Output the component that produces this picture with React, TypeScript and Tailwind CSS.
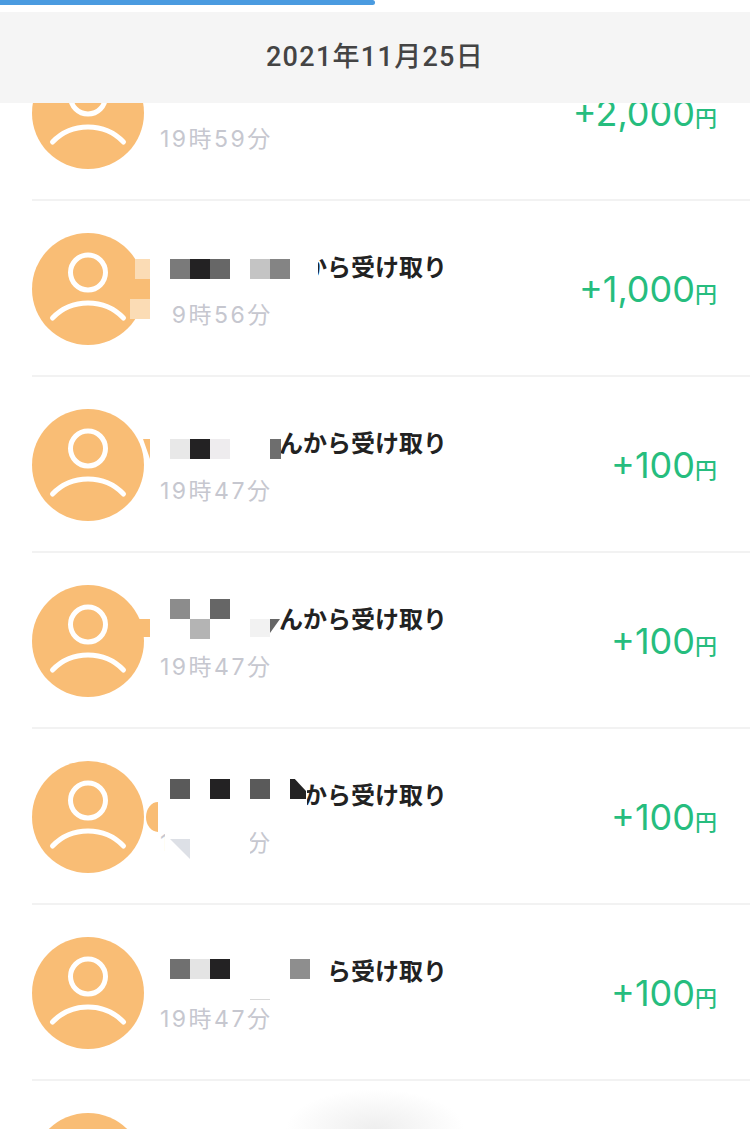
// 受け取り履歴リスト
type Cell = { x: number; y: number; w: number; h: number; c: string; clip?: string };

const FONT = { fontFamily: '"Liberation Sans", "Noto Sans CJK JP", sans-serif' };
const HEADER_FONT = { fontFamily: 'Roboto, "Noto Sans CJK JP", sans-serif' };
const NUM_FONT = { fontFamily: 'Inter, "Noto Sans CJK JP", sans-serif' };

const ORANGE = "#f9bd75";
const SOFT = "#fbdcb5";

type Row = { label: string; time: string; amount: string; cells: Cell[] };

const rows: Row[] = [
  { label: "から受け取り", time: "19時59分", amount: "+2,000", cells: [] },
  {
    label: "から受け取り",
    time: "19時56分",
    amount: "+1,000",
    cells: [
      { x: 135, y: 58, w: 15, h: 20, c: SOFT },
      { x: 135, y: 78, w: 15, h: 20, c: ORANGE },
      { x: 130, y: 98, w: 20, h: 20, c: SOFT },
      { x: 150, y: 50, w: 20, h: 80, c: "#fff" },
      { x: 170, y: 50, w: 148, h: 50, c: "#fff" },
      { x: 160, y: 100, w: 4, h: 30, c: "#fff" },
      { x: 170, y: 58, w: 20, h: 20, c: "#7a7a7a" },
      { x: 190, y: 58, w: 20, h: 20, c: "#232223" },
      { x: 210, y: 58, w: 20, h: 20, c: "#676767" },
      { x: 250, y: 58, w: 20, h: 20, c: "#c4c4c4" },
      { x: 270, y: 58, w: 20, h: 20, c: "#848484" },
    ],
  },
  {
    label: "んから受け取り",
    time: "19時47分",
    amount: "+100",
    cells: [
      { x: 143, y: 62, w: 7, h: 20, c: ORANGE, clip: "polygon(0 0,100% 0,100% 100%)" },
      { x: 150, y: 50, w: 131, h: 45, c: "#fff" },
      { x: 170, y: 62, w: 20, h: 20, c: "#e8e8e8" },
      { x: 190, y: 62, w: 20, h: 20, c: "#232223" },
      { x: 210, y: 62, w: 20, h: 20, c: "#eeecee" },
      { x: 270, y: 62, w: 11, h: 20, c: "#6e6e6e" },
    ],
  },
  {
    label: "んから受け取り",
    time: "19時47分",
    amount: "+100",
    cells: [
      { x: 131, y: 66, w: 19, h: 18, c: ORANGE },
      { x: 150, y: 40, w: 122, h: 55, c: "#fff" },
      { x: 170, y: 46, w: 20, h: 20, c: "#8c8c8c" },
      { x: 210, y: 46, w: 20, h: 20, c: "#666666" },
      { x: 190, y: 66, w: 20, h: 20, c: "#b4b4b4" },
      { x: 250, y: 66, w: 20, h: 18, c: "#f2f2f2" },
      { x: 270, y: 66, w: 10, h: 14, c: "#666666", clip: "polygon(0 0,100% 0,0 100%)" },
    ],
  },
  {
    label: "から受け取り",
    time: "19時47分",
    amount: "+100",
    cells: [
      { x: 150, y: 40, w: 157, h: 55, c: "#fff" },
      { x: 165, y: 95, w: 85, h: 40, c: "#fff" },
      { x: 146, y: 73, w: 12, h: 30, c: ORANGE, clip: "ellipse(100% 50% at 100% 50%)" },
      { x: 170, y: 50, w: 20, h: 20, c: "#5a5a5a" },
      { x: 210, y: 50, w: 20, h: 20, c: "#232223" },
      { x: 250, y: 50, w: 20, h: 20, c: "#5a5a5a" },
      { x: 290, y: 50, w: 16, h: 20, c: "#232223", clip: "polygon(0 0,30% 0,100% 60%,100% 100%,0 100%)" },
      { x: 170, y: 110, w: 20, h: 20, c: "#dde0e6", clip: "polygon(0 0,100% 0,100% 100%)" },
    ],
  },
  {
    label: "から受け取り",
    time: "19時47分",
    amount: "+100",
    cells: [
      { x: 160, y: 40, w: 167, h: 55, c: "#fff" },
      { x: 170, y: 54, w: 20, h: 20, c: "#707070" },
      { x: 190, y: 54, w: 20, h: 20, c: "#e4e4e4" },
      { x: 210, y: 54, w: 20, h: 20, c: "#232223" },
      { x: 290, y: 54, w: 20, h: 20, c: "#8e8e8e" },
      { x: 250, y: 94, w: 20, h: 1, c: "#d8d8d8" },
    ],
  },
];

function Avatar() {
  return (
    <div className="h-[112px] w-[112px] shrink-0 rounded-full bg-[#f9bd75]">
      <svg viewBox="0 0 112 112" className="h-full w-full" fill="none" stroke="#fff" strokeWidth="5" strokeLinecap="round">
        <circle cx="56" cy="39.5" r="17.5" />
        <path d="M20.5 85C30 75 42 70 56 70s26 5 35.5 15" />
      </svg>
    </div>
  );
}

function HistoryRow({ row }: { row?: Row }) {
  return (
    <li className="relative h-[176px]">
      <div className="ml-8 flex h-full items-center border-b-2 border-[#f2f2f2] pt-[2px] pr-[33px]">
        <Avatar />
        {row && (
          <>
            <div className="ml-4 flex w-[287px] flex-col pt-[4px]">
              <p className="text-right text-[24px] leading-[32px] font-bold text-[#222222]">{row.label}</p>
              <p className="mt-[15px] text-[23px] leading-[32px] tracking-[2.5px] text-[#c6c7cf]" style={NUM_FONT}>
                {row.time}
              </p>
            </div>
            <p className="ml-auto pt-[4px] text-[36px] leading-[44px] text-[#26bd7e]" style={NUM_FONT}>
              {row.amount}
              <span className="text-[22px] font-medium">円</span>
            </p>
          </>
        )}
      </div>
      {/* モザイク */}
      {row?.cells.map((cell, i) => (
        <div
          key={i}
          className="absolute"
          style={{ left: cell.x, top: cell.y, width: cell.w, height: cell.h, background: cell.c, clipPath: cell.clip }}
        />
      ))}
    </li>
  );
}

export default function App() {
  return (
    <div className="relative h-[1129px] w-[750px] overflow-hidden bg-white" style={FONT}>
      <div className="relative z-10 h-[12px] bg-white">
        <div className="h-[5px] w-[375px] rounded-r-full bg-[#4a9be0]" />
      </div>
      <header className="relative z-10 flex h-[91px] items-center justify-center bg-[#f5f5f5]" style={HEADER_FONT}>
        <h1 className="text-[27px] font-medium tracking-[1.3px] text-[#444444]">2021年11月25日</h1>
      </header>

      <ul className="-mt-[78px]">
        {rows.map((row, i) => (
          <HistoryRow key={i} row={row} />
        ))}
        <HistoryRow />
      </ul>

      {/* 下部の影 */}
      <div className="absolute bottom-[-40px] left-[285px] h-[80px] w-[180px] bg-[radial-gradient(ellipse_at_center,#eeeeee_0%,#ffffff_70%)]" />
    </div>
  );
}
